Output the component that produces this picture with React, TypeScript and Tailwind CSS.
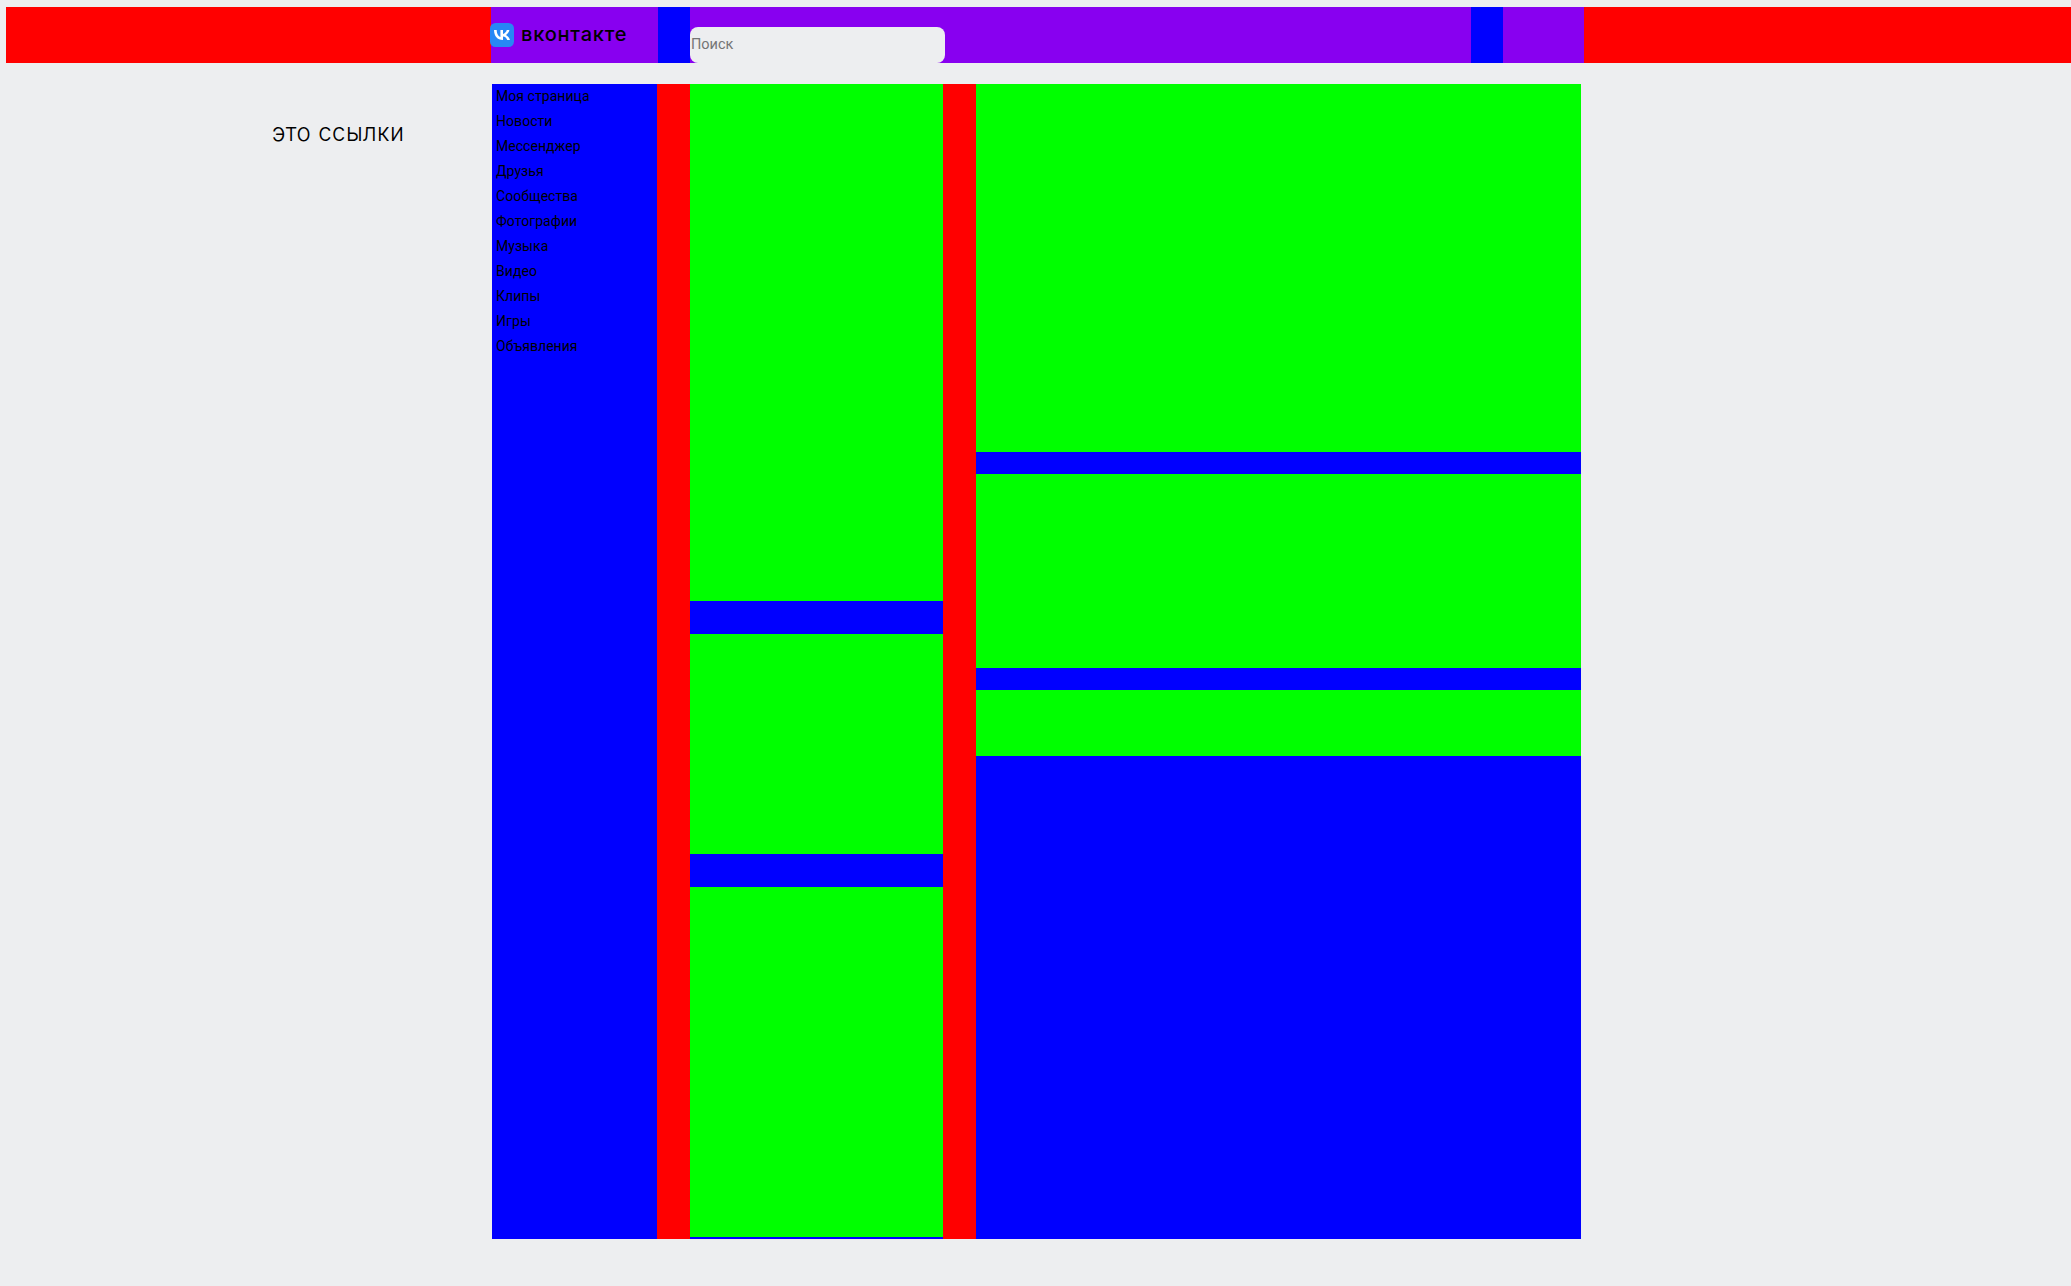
import React from 'react';

const LINKS = ['Моя страница', 'Новости', 'Мессенджер', 'Друзья', 'Сообщества', 'Фотографии', 'Музыка', 'Видео', 'Клипы', 'Игры', 'Объявления'];

const VkLogo = () => (
  <svg width="24" height="24" viewBox="0 0 24 24" className="shrink-0">
    <rect width="24" height="24" rx="5.5" fill="#2787f5" />
    <path
      fill="#fff"
      d="M12.8 17C7.3 17 4.2 13.2 4 7h2.700c.1 4.600 2.100 6.500 3.700 6.900V7h2.600v3.900c1.600-.2 3.200-2 3.800-3.900H19.400c-.4 2.400-2.200 4.200-3.500 5 1.300.6 3.300 2.200 4.100 5h-2.800c-.6-1.900-2.100-3.300-4.200-3.500V17h-.2z"
    />
  </svg>
);

const App: React.FC = () => {
  return (
    <div className="h-[1286px] w-[2071px] overflow-hidden bg-[#edeef0] pt-[7px] font-['Roboto',sans-serif] text-black">
      {/* Header */}
      <header className="ml-[6px] flex h-[56px] w-[2065px] bg-[#ff0000] pl-[485px]">
        <div className="flex h-full w-[1093px] bg-[#8800f0]">
          <div className="-ml-[1px] flex w-[168px] items-start pt-[16px]">
            <VkLogo />
            <span className="-mt-[1px] ml-[7px] font-['Inter',sans-serif] text-[20px] leading-[24px] font-medium tracking-[0.8px]">вконтакте</span>
          </div>
          <div className="w-[32px] bg-[#0000ff]" />
          <div className="w-[781px] pt-[20px]">
            <input
              placeholder="Поиск"
              className="h-[36px] w-[255px] rounded-[8px] bg-[#edeef0] pb-[2px] pl-[1px] font-['Roboto',sans-serif] text-[14.5px] outline-none placeholder:text-[#757575]"
            />
          </div>
          <div className="w-[32px] bg-[#0000ff]" />
          <div className="w-[81px]" />
        </div>
      </header>

      <div className="mt-[21px] flex">
        {/* Label column */}
        <div className="w-[492px] pl-[272px] pt-[35px]">
          <span className="font-['Inter',sans-serif] text-[24px] leading-[28px] font-light tracking-[0.4px]">это ссылки</span>
        </div>

        {/* Main layout */}
        <div className="flex h-[1155px] w-[1089px]">
          <nav className="w-[165px] bg-[#0000ff] pl-[4px]">
            {LINKS.map((link) => (
              <div key={link} className="h-[25px] text-[14px] leading-[25px] tracking-[0.05px]">{link}</div>
            ))}
          </nav>
          <div className="w-[33px] bg-[#ff0000]" />
          <div className="flex w-[253px] flex-col bg-[#0000ff]">
            <div className="h-[517px] bg-[#00ff00]" />
            <div className="mt-[33px] h-[220px] bg-[#00ff00]" />
            <div className="mt-[33px] h-[350px] bg-[#00ff00]" />
          </div>
          <div className="w-[33px] bg-[#ff0000]" />
          <div className="flex w-[605px] flex-col bg-[#0000ff]">
            <div className="h-[368px] bg-[#00ff00]" />
            <div className="mt-[22px] h-[194px] bg-[#00ff00]" />
            <div className="mt-[22px] h-[66px] bg-[#00ff00]" />
          </div>
        </div>
      </div>
    </div>
  );
};

export default App;
